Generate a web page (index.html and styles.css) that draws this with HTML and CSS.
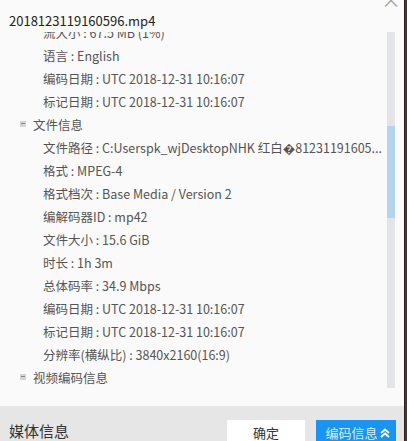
FILE: index.html
```html
<!DOCTYPE html>
<html lang="zh-CN">

<head>
    <meta charset="UTF-8">
    <title>媒体信息</title>
    <link rel="stylesheet" href="styles.css">
</head>

<body>
    <div class="screen">
        <div class="dialog">
            <div class="header">
                <span class="title">2018123119160596.mp4</span>
                <span class="close">×</span>
            </div>

            <div class="content">
                <div class="scroll">
                    <ul class="tree">
                        <li class="item">流大小 : 67.5 MB (1%)</li>
                        <li class="item">语言 : English</li>
                        <li class="item">编码日期 : UTC 2018-12-31 10:16:07</li>
                        <li class="item">标记日期 : UTC 2018-12-31 10:16:07</li>
                        <li class="group"><span class="toggle"></span>文件信息</li>
                        <li class="item">文件路径 : C:Userspk_wjDesktopNHK 红白&#xFFFD;81231191605...</li>
                        <li class="item">格式 : MPEG-4</li>
                        <li class="item">格式档次 : Base Media / Version 2</li>
                        <li class="item">编解码器ID : mp42</li>
                        <li class="item">文件大小 : 15.6 GiB</li>
                        <li class="item">时长 : 1h 3m</li>
                        <li class="item">总体码率 : 34.9 Mbps</li>
                        <li class="item">编码日期 : UTC 2018-12-31 10:16:07</li>
                        <li class="item">标记日期 : UTC 2018-12-31 10:16:07</li>
                        <li class="item">分辨率(横纵比) : 3840x2160(16:9)</li>
                        <li class="group"><span class="toggle"></span>视频编码信息</li>
                    </ul>
                </div>
                <div class="scrollbar">
                    <div class="thumb"></div>
                </div>
            </div>

            <div class="footer">
                <span class="footer-title">媒体信息</span>
                <div class="buttons">
                    <button class="btn btn-ok">确定</button>
                    <button class="btn btn-more">编码信息<svg class="chevron" width="12" height="10" viewBox="0 0 12 10">
                            <path d="M2 5 L6 1.5 L10 5 M2 9 L6 5.5 L10 9" fill="none" stroke="#ffffff" stroke-width="1.8" />
                        </svg></button>
                </div>
            </div>
        </div>
        <div class="edge"></div>
    </div>
</body>

</html>
```

FILE: styles.css
```css
body {
    margin: 0;
    font-family: "Noto Sans CJK SC", "Noto Sans", sans-serif;
    background-color: #fafafa;
}

.screen {
    display: flex;
    width: 407px;
    height: 441px;
    overflow: hidden;
}

.dialog {
    width: 404px;
    height: 441px;
    display: flex;
    flex-direction: column;
    background-color: #fafafa;
}

.edge {
    flex: 1;
    background-color: #4a3434;
    border-left: 1px solid #2e2222;
}

.header {
    height: 32px;
    display: flex;
    justify-content: space-between;
    align-items: flex-start;
    padding-left: 9px;
    box-sizing: border-box;
}

.title {
    margin-top: 11px;
    font-size: 13px;
    line-height: 20px;
    color: #222;
}

.close {
    margin-top: -10px;
    margin-right: 3px;
    font-size: 20px;
    line-height: 20px;
    color: #a8a8a8;
}

.content {
    flex: 1;
    display: flex;
    overflow: hidden;
}

.scroll {
    flex: 1;
    overflow: hidden;
}

.tree {
    list-style: none;
    margin: -11px 0 0 0;
    padding: 0;
}

.tree li {
    height: 23px;
    line-height: 23px;
    font-size: 12.5px;
    color: #555;
    white-space: nowrap;
}

.item {
    padding-left: 43px;
}

.group {
    display: flex;
    align-items: center;
    gap: 7px;
    padding-left: 20px;
}

.toggle {
    position: relative;
    width: 6px;
    height: 6px;
    background-color: #d4d4d4;
    margin-top: -2px;
}

.toggle::after {
    content: "";
    position: absolute;
    left: 1px;
    top: 2px;
    width: 4px;
    height: 1px;
    background-color: #888;
}

.scrollbar {
    width: 8px;
    height: 356px;
    margin-right: 9px;
    background-color: #e3e4e8;
    padding-top: 94px;
    box-sizing: border-box;
}

.thumb {
    height: 92px;
    background-color: #b2d4f1;
}

.footer {
    height: 35px;
    display: flex;
    justify-content: space-between;
    align-items: flex-start;
    padding: 14px 8px 0 9px;
    box-sizing: border-box;
    background-color: #e6e6e6;
}

.footer-title {
    margin-top: 0;
    font-size: 15px;
    line-height: 22px;
    color: #333;
}

.buttons {
    display: flex;
    gap: 11px;
}

.btn {
    height: 28px;
    border: none;
    padding: 0;
    font-family: "Noto Sans CJK SC", sans-serif;
    font-size: 13px;
    line-height: 26px;
    display: flex;
    align-items: flex-start;
    justify-content: center;
}

.btn-ok {
    width: 78px;
    background-color: #ffffff;
    color: #333;
}

.btn-more {
    width: 80px;
    background-color: #1a94f2;
    color: #d8ecff;
    gap: 1px;
    padding-left: 4px;
}

.chevron {
    margin-top: 8px;
}
```
